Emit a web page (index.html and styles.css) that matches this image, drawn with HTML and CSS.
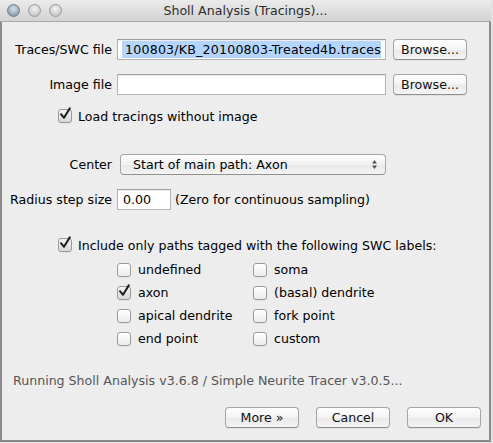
FILE: index.html
```html
<!DOCTYPE html>
<html>
<head>
<meta charset="utf-8">
<link rel="stylesheet" href="styles.css">
</head>
<body>
<div class="window">
  <div class="titlebar">
    <div class="lights">
      <span class="light light-first"></span>
      <span class="light"></span>
      <span class="light"></span>
    </div>
    <div class="title">Sholl Analysis (Tracings)...</div>
  </div>
  <div class="content">
    <div class="row row-file">
      <div class="label">Traces/SWC file</div>
      <div class="field field-wide"><div class="clip"><span class="sel">100803/KB_20100803-Treated4b.traces</span></div></div>
      <div class="button btn-browse">Browse...</div>
    </div>
    <div class="row row-image">
      <div class="label">Image file</div>
      <div class="field field-wide"></div>
      <div class="button btn-browse">Browse...</div>
    </div>
    <div class="row row-load">
      <span class="check checked"><svg viewBox="0 0 14 14" width="14" height="14"><path d="M3 7.2 L6 10.8 L11.8 1.4" fill="none" stroke="#1d1d1d" stroke-width="2" stroke-linecap="round" stroke-linejoin="round"/></svg></span>
      <span class="check-text">Load tracings without image</span>
    </div>
    <div class="row row-center">
      <div class="label label-center">Center</div>
      <div class="select">
        <span>Start of main path: Axon</span>
        <svg class="arrows" viewBox="0 0 7 11" width="7" height="11"><path d="M3.5 1 L6 4.5 L1 4.5 Z M3.5 10 L6 6.5 L1 6.5 Z" fill="#555"/></svg>
      </div>
    </div>
    <div class="row row-radius">
      <div class="label">Radius step size</div>
      <div class="field field-small">0.00</div>
      <span class="hint">(Zero for continuous sampling)</span>
    </div>
    <div class="row row-include">
      <span class="check checked"><svg viewBox="0 0 14 14" width="14" height="14"><path d="M3 7.2 L6 10.8 L11.8 1.4" fill="none" stroke="#1d1d1d" stroke-width="2" stroke-linecap="round" stroke-linejoin="round"/></svg></span>
      <span class="check-text">Include only paths tagged with the following SWC labels:</span>
    </div>
    <div class="labels-grid">
      <div class="opt"><span class="check"></span><span class="check-text">undefined</span></div>
      <div class="opt"><span class="check"></span><span class="check-text">soma</span></div>
      <div class="opt"><span class="check checked"><svg viewBox="0 0 14 14" width="14" height="14"><path d="M3 7.2 L6 10.8 L11.8 1.4" fill="none" stroke="#1d1d1d" stroke-width="2" stroke-linecap="round" stroke-linejoin="round"/></svg></span><span class="check-text">axon</span></div>
      <div class="opt"><span class="check"></span><span class="check-text">(basal) dendrite</span></div>
      <div class="opt"><span class="check"></span><span class="check-text">apical dendrite</span></div>
      <div class="opt"><span class="check"></span><span class="check-text">fork point</span></div>
      <div class="opt"><span class="check"></span><span class="check-text">end point</span></div>
      <div class="opt"><span class="check"></span><span class="check-text">custom</span></div>
    </div>
    <div class="status">Running Sholl Analysis v3.6.8 / Simple Neurite Tracer v3.0.5...</div>
    <div class="buttons">
      <div class="button">More »</div>
      <div class="button">Cancel</div>
      <div class="button">OK</div>
    </div>
  </div>
</div>
</body>
</html>
```
FILE: styles.css
```css
* { box-sizing: border-box; }
html, body { margin: 0; padding: 0; }
body {
  width: 493px;
  height: 443px;
  background: #e2e2e2;
  font-family: "DejaVu Sans", sans-serif;
  font-size: 12.6px;
  color: #000;
  overflow: hidden;
}
.window {
  width: 491px;
  height: 442px;
  background: #ededed;
  border: 1px solid #8a8a8a;
  border-top: none;
  border-left-width: 2px;
  border-right-width: 2px;
  border-bottom-width: 2px;
  display: flex;
  flex-direction: column;
}
.titlebar {
  height: 22px;
  flex: none;
  position: relative;
  background: linear-gradient(#ebebeb, #d3d3d3);
  border-bottom: 1px solid #a9a9a9;
  margin: 0 -2px;
}
.lights {
  display: flex;
  gap: 8px;
  padding: 4px 0 0 7px;
}
.light {
  width: 13px;
  height: 13px;
  border-radius: 50%;
  background: radial-gradient(circle at 50% 35%, #f4f4f4, #c9c9c9 70%, #b8b8b8);
  border: 1px solid #9c9c9c;
}
.light-first {
  background: radial-gradient(circle at 50% 35%, #d8e0e8, #93a3b3 70%, #7d8d9c);
  border-color: #6f7c88;
}
.title {
  position: absolute;
  left: 0;
  right: 0;
  top: 3px;
  text-align: center;
  color: #2c2c2c;
}
.content {
  flex: 1;
  display: flex;
  flex-direction: column;
}
.row {
  display: flex;
  align-items: center;
}
.label {
  width: 110px;
  text-align: right;
  margin-right: 5px;
  flex: none;
}
.label-center { margin-right: 8px; }
.row-file { margin-top: 16px; height: 22px; }
.row-image { margin-top: 13px; height: 22px; }
.row-load { margin-top: 12px; height: 18px; padding-left: 56px; }
.row-center { margin-top: 29px; height: 21px; }
.row-radius { margin-top: 13px; height: 22px; }
.row-include { margin-top: 26px; height: 18px; padding-left: 56px; }
.field {
  height: 21px;
  background: #fff;
  border: 1px solid #b4b4b4;
  border-top-color: #9c9c9c;
  box-shadow: inset 0 1px 1px rgba(0,0,0,0.08);
  display: flex;
  align-items: center;
  padding: 0 4px;
}
.field-wide { width: 269px; padding: 0; }
.clip {
  margin: 0 4px;
  overflow: hidden;
  display: flex;
  justify-content: flex-end;
  width: 100%;
  white-space: nowrap;
}
.sel {
  background: #b4d5fe;
  flex: 1;
  text-align: right;
  line-height: 17px;
  letter-spacing: 0.2px;
}
.field-small { width: 54px; padding-left: 5px; margin-right: 4px; }
.button {
  width: 74px;
  height: 21px;
  display: flex;
  align-items: center;
  justify-content: center;
  background: linear-gradient(#ffffff, #f3f3f3 50%, #e9e9e9 51%, #f4f4f4);
  border: 1px solid #a5a5a5;
  border-bottom-color: #8f8f8f;
  border-radius: 4px;
  box-shadow: 0 1px 0 rgba(0,0,0,0.05);
  color: #111;
  flex: none;
}
.btn-browse { margin-left: 7px; }
.check {
  width: 14px;
  height: 14px;
  flex: none;
  border: 1px solid #9a9a9a;
  border-radius: 3px;
  background: linear-gradient(#ffffff, #ececec);
  box-shadow: 0 1px 0 rgba(0,0,0,0.04);
  position: relative;
}
.check svg {
  position: absolute;
  left: -1px;
  top: -3px;
}
.checked { background: linear-gradient(#f4f4f4, #d7d7d7); }
.check-text { margin-left: 6px; }
.select {
  margin-left: 0;
  width: 266px;
  height: 21px;
  border: 1px solid #a7a7a7;
  border-bottom-color: #919191;
  border-radius: 4px;
  background: linear-gradient(#ffffff, #f1f1f1 50%, #e8e8e8 51%, #f3f3f3);
  display: flex;
  align-items: center;
  justify-content: space-between;
  padding: 0 7px 0 12px;
}
.hint { margin-left: 0; }
.labels-grid {
  margin-top: 4px;
  margin-left: 115px;
  display: grid;
  grid-template-columns: 136px auto;
  grid-auto-rows: 23px;
}
.opt {
  display: flex;
  align-items: center;
}
.opt .check-text { margin-left: 7px; }
.status {
  margin-top: 23px;
  margin-left: 11px;
  color: #555;
}
.buttons {
  margin-top: 19px;
  display: flex;
  gap: 17px;
  padding-left: 223px;
}
```
